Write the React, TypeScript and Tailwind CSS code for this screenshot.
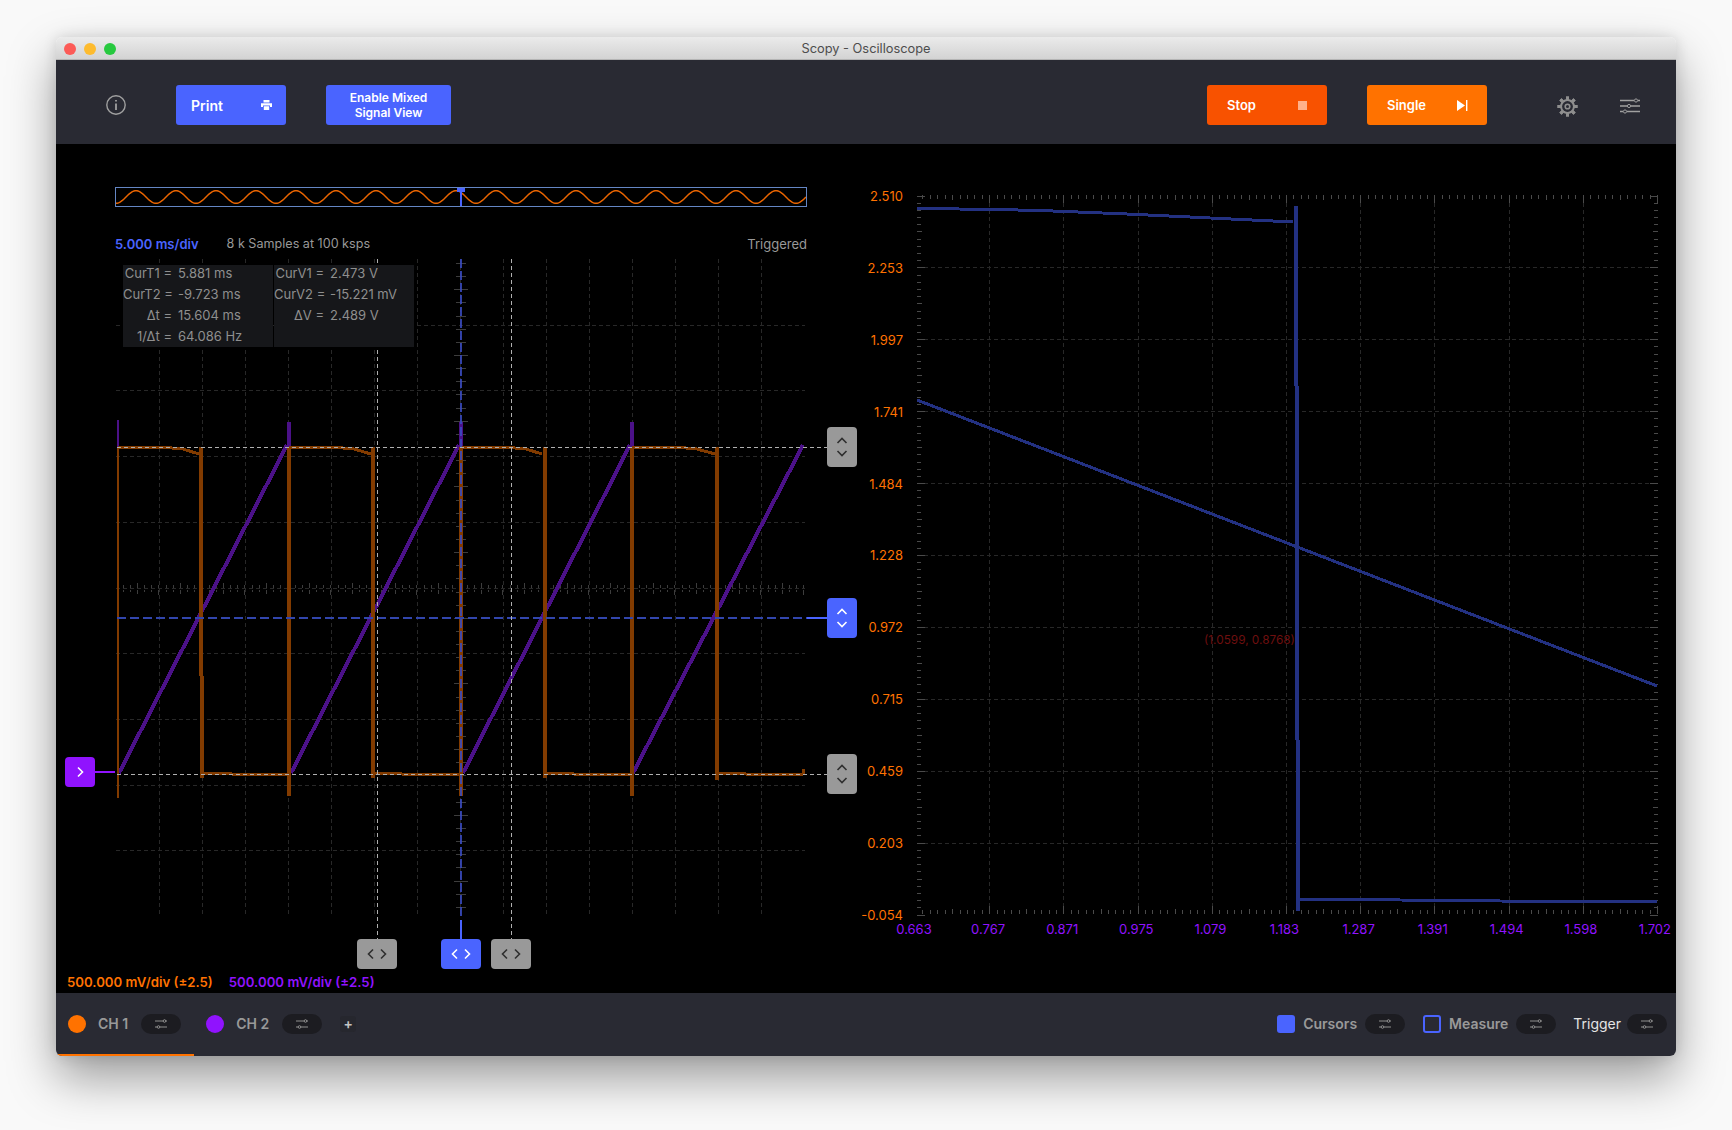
import React from "react";

const BLUE = "#4a64ff";
const WAVE_ORANGE = "#823b00";
const WAVE_PURPLE = "#4b1188";
const WAVE_BLUE = "#233182";
const GRID = "#282828";
const TICK = "#3d3d3d";

const range = (n: number) => Array.from({ length: n }, (_, i) => i);

// small sliders glyph used in toolbar and channel pills
const Sliders = ({ w, h, color }: { w: number; h: number; color: string }) => (
  <svg width={w} height={h} viewBox="0 0 20 16" fill="none" stroke={color}>
    <path d="M0 2.5h14M18 2.5h2M0 8h7M11 8h9M0 13.5h3M7 13.5h13" strokeWidth="1.6" />
    <circle cx="16" cy="2.5" r="1.6" strokeWidth="1" />
    <circle cx="9" cy="8" r="1.6" strokeWidth="1" />
    <circle cx="5" cy="13.5" r="1.6" strokeWidth="1" />
  </svg>
);

const PillSliders = () => (
  <svg width="12" height="10" viewBox="0 0 12 10" fill="none" stroke="#8f8f8f" strokeWidth="1">
    <path d="M0 2h8M11 2h1M0 8h2M5 8h7" />
    <circle cx="9.5" cy="2" r="1.3" />
    <circle cx="3.5" cy="8" r="1.3" />
  </svg>
);

const Pill = ({ className }: { className: string }) => (
  <div className={`w-10 h-5 rounded-full bg-[#1c1c21] flex items-center justify-center ${className}`}>
    <PillSliders />
  </div>
);

const Gear = () => (
  <svg width="21" height="21" viewBox="0 0 21 21" fill="none">
    {range(8).map((i) => (
      <rect key={i} x="9" y="0.5" width="3" height="20" fill="#8e8e8e" transform={`rotate(${i * 45} 10.5 10.5)`} />
    ))}
    <circle cx="10.5" cy="10.5" r="7.4" fill="#8e8e8e" />
    <circle cx="10.5" cy="10.5" r="5.4" fill="#292a33" />
    <circle cx="10.5" cy="10.5" r="2.3" stroke="#8e8e8e" strokeWidth="1.6" />
  </svg>
);

const Handle = ({
  className,
  active,
  dir,
}: {
  className: string;
  active?: boolean;
  dir: "h" | "v";
}) => {
  const stroke = active ? "#ffffff" : "#2f2f2f";
  return (
    <div
      className={`absolute rounded-[4px] flex items-center justify-center ${active ? "bg-[#4a64ff]" : "bg-[#999999]"} ${className}`}
    >
      {dir === "h" ? (
        <svg width="20" height="12" viewBox="0 0 20 12" fill="none" stroke={stroke} strokeWidth="1.6">
          <path d="M6 1.5 1.5 6 6 10.5M14 1.5 18.5 6 14 10.5" />
        </svg>
      ) : (
        <svg width="12" height="20" viewBox="0 0 12 20" fill="none" stroke={stroke} strokeWidth="1.6">
          <path d="M1.5 6 6 1.5 10.5 6M1.5 14 6 18.5 10.5 14" />
        </svg>
      )}
    </div>
  );
};

const Overview = () => {
  const pts = range(692).map((i) => {
    const y = 10 - 6.3 * Math.sin(((i + 115 - 136) / 40) * 2 * Math.PI + Math.PI / 2);
    return `${i},${y.toFixed(2)}`;
  });
  return (
    <svg width="692" height="20" viewBox="0 0 692 20" className="block">
      <polyline points={pts.join(" ")} fill="none" stroke="#e86400" strokeWidth="1.5" />
      <rect x="0.5" y="0.5" width="691" height="19" fill="none" stroke="#6486c4" />
      <rect x="342" y="1" width="8" height="4" fill={BLUE} />
      <rect x="345" y="1" width="2" height="18" fill={BLUE} />
    </svg>
  );
};

const ORANGE_LINES = [
  "118,447.5 167,447.5 183,449 199,454",
  "289,447.5 338,447.5 354,449 371,454",
  "461,447.5 510,447.5 526,449 542,454",
  "632,447.5 681,447.5 697,449 715,454",
  "202,773 228,773 232,774 288,774",
  "373,773 398,773 402,774 461,774",
  "545,773 570,773 574,774 631,774",
  "717,773 742,773 746,774 803,774",
];

const ScopePlot = () => {
  const vGrid = range(15).map((i) => 159 + 43 * i);
  const hGrid = range(9).map((i) => 324.7 + 65.7 * i);
  const rulerX = range(96).map((i) => 123 + (43 / 6) * i);
  const rulerY = range(50).map((i) => 263 + 13.14 * i);
  return (
    <svg width="804" height="720" viewBox="56 252 804 720" className="block">
      <g stroke={GRID} strokeDasharray="4 3" shapeRendering="crispEdges">
        {vGrid.map((x) => (
          <line key={x} x1={x + 0.5} x2={x + 0.5} y1="259" y2="916" />
        ))}
        {hGrid.map((y) => (
          <line key={y} x1="116" x2="805" y1={Math.round(y) + 0.5} y2={Math.round(y) + 0.5} />
        ))}
      </g>
      <g stroke={TICK} shapeRendering="crispEdges">
        {rulerX.map((x, i) => (
          <g key={i}>
            <line x1={x} x2={x} y1={i % 6 === 2 ? 583 : 585} y2="588" />
            <line x1={x} x2={x} y1="590" y2={i % 6 === 5 ? 595 : i % 6 === 2 ? 594 : 592} />
          </g>
        ))}
        {rulerY.map((y, i) => (
          <line
            key={i}
            x1={i % 5 === 2 ? 454 : 456}
            x2={i % 5 === 2 ? 467.5 : 465.5}
            y1={Math.round(y) + 0.5}
            y2={Math.round(y) + 0.5}
          />
        ))}
      </g>

      {/* channel 2 ramps */}
      <g stroke={WAVE_PURPLE} fill="none" shapeRendering="crispEdges">
        <path d="M119 773 287 445M291 773 459 445M463 773 630 445M633 773 803 445" strokeWidth="4" />
        <path d="M118 420V447" strokeWidth="2" />
        <path d="M289 422V447M461 422V447M632 422V447" strokeWidth="4" />
      </g>

      {/* channel 1 square */}
      <g stroke={WAVE_ORANGE} fill="none" strokeWidth="3" shapeRendering="crispEdges">
        {ORANGE_LINES.map((p) => (
          <polyline key={p} points={p} />
        ))}
        <path d="M118 447V798" strokeWidth="2" />
        <path d="M201 447V676" strokeWidth="4" />
        <path d="M201.5 676V758" strokeWidth="4" />
        <path d="M202 758V778" strokeWidth="4" />
        <path d="M289 447V796M373 447V778M461 447V796M545 447V778M632 447V796M717 447V780" strokeWidth="4" />
        <path d="M803 769V774" strokeWidth="3" />
      </g>

      {/* trigger + cursors */}
      <g shapeRendering="crispEdges">
        <line x1="117" x2="807" y1="618" y2="618" stroke="#3246ad" strokeWidth="2" strokeDasharray="9 4" />
        <line x1="807" x2="827" y1="618" y2="618" stroke={BLUE} strokeWidth="2" />
        <line x1="461" x2="461" y1="259" y2="916" stroke="#3a4cc4" strokeWidth="2" strokeDasharray="9 3" opacity="0.85" />
        <line x1="461" x2="461" y1="920" y2="940" stroke={BLUE} strokeWidth="2" />
        <g stroke="#b0b0b0" strokeDasharray="4 3">
          <line x1="117" x2="827" y1="447.5" y2="447.5" />
          <line x1="117" x2="827" y1="774.5" y2="774.5" />
          <line x1="377.5" x2="377.5" y1="259" y2="940" />
          <line x1="511.5" x2="511.5" y1="259" y2="940" />
        </g>
        <line x1="95" x2="115" y1="772" y2="772" stroke="#9013fe" strokeWidth="2" />
      </g>
    </svg>
  );
};

const RightPlot = () => {
  const xs = range(9).map((i) => 989.2 + 74.2 * i);
  const ys = range(9).map((i) => 267.4 + 71.9 * i);
  const xTicks = range(101).map((i) => 915 + 7.42 * i);
  const yTicks = range(101).map((i) => 195.5 + 7.19 * i);
  const tickLen = (i: number) => (i % 10 === 0 ? 8 : i % 5 === 0 ? 5 : 4);
  return (
    <svg width="773" height="731" viewBox="903 190 773 731" className="block">
      <g stroke={GRID} strokeDasharray="4 3" shapeRendering="crispEdges">
        {xs.map((x) => (
          <line key={x} x1={Math.round(x) + 0.5} x2={Math.round(x) + 0.5} y1="196" y2="914" />
        ))}
        {ys.map((y) => (
          <line key={y} x1="917" x2="1657" y1={Math.round(y) + 0.5} y2={Math.round(y) + 0.5} />
        ))}
      </g>
      <g stroke="#4a4a4a" shapeRendering="crispEdges">
        {xTicks.map((x, i) =>
          x < 917 ? null : (
            <g key={i}>
              <line x1={Math.round(x) + 0.5} x2={Math.round(x) + 0.5} y1="195" y2={195 + tickLen(i)} />
              <line x1={Math.round(x) + 0.5} x2={Math.round(x) + 0.5} y1={914 - tickLen(i)} y2="914" />
            </g>
          ),
        )}
        {yTicks.map((y, i) => (
          <g key={i}>
            <line x1="917" x2={917 + tickLen(i)} y1={Math.round(y) + 0.5} y2={Math.round(y) + 0.5} />
            <line x1={1658 - tickLen(i)} x2="1658" y1={Math.round(y) + 0.5} y2={Math.round(y) + 0.5} />
          </g>
        ))}
      </g>
      <g stroke={WAVE_BLUE} fill="none" shapeRendering="crispEdges">
        <path d="M917 400 1657 686" strokeWidth="3" />
        <polyline points="917,208.5 1000,209.5 1053,211 1127,214 1200,217.5 1293,222" strokeWidth="3" />
        <polyline points="1298,899 1400,900 1500,901 1657,902" strokeWidth="3" />
        <path d="M1296 206V386" strokeWidth="4" />
        <path d="M1297 386V740" strokeWidth="4" />
        <path d="M1298 740V911" strokeWidth="4" />
      </g>
    </svg>
  );
};

const CURSOR_T = [
  ["CurT1 =", "5.881 ms"],
  ["CurT2 =", "-9.723 ms"],
  ["Δt =", "15.604 ms"],
  ["1/Δt =", "64.086 Hz"],
];
const CURSOR_V = [
  ["CurV1 =", "2.473 V"],
  ["CurV2 =", "-15.221 mV"],
  ["ΔV =", "2.489 V"],
];

const CursorTable = () => (
  <div className="absolute left-[67px] top-[13px] w-[291px] h-[82px] flex gap-[1px] text-[13px] leading-[21px] text-[#8f8f8f]">
    <div className="w-[150px] bg-[#16171a]">
      <div className="-mt-[2px]">
        {CURSOR_T.map(([k, v]) => (
          <div key={k} className="flex">
            <span className="w-[49px] text-right whitespace-pre">{k}</span>
            <span className="ml-[6px]">{v}</span>
          </div>
        ))}
      </div>
    </div>
    <div className="flex-1 bg-[#16171a]">
      <div className="-mt-[2px]">
        {CURSOR_V.map(([k, v]) => (
          <div key={k} className="flex">
            <span className="w-[50px] text-right whitespace-pre">{k}</span>
            <span className="ml-[6px]">{v}</span>
          </div>
        ))}
      </div>
    </div>
  </div>
);

const Y_LABELS = ["2.510", "2.253", "1.997", "1.741", "1.484", "1.228", "0.972", "0.715", "0.459", "0.203", "-0.054"];
const X_LABELS = ["0.663", "0.767", "0.871", "0.975", "1.079", "1.183", "1.287", "1.391", "1.494", "1.598", "1.702"];

export default function App() {
  return (
    <div
      className="w-[1732px] h-[1130px] bg-[#f9f9f9] overflow-hidden pt-[37px] pl-[56px]"
      style={{ fontFamily: "Inter, 'Liberation Sans', sans-serif" }}
    >
      <div className="w-[1620px] h-[1019px] flex flex-col rounded-[6px] overflow-hidden shadow-[0_22px_48px_rgba(0,0,0,0.38),0_0_14px_rgba(0,0,0,0.12)]">
        {/* Title bar */}
        <div className="relative h-[23px] shrink-0 bg-gradient-to-b from-[#ebebeb] to-[#d3d3d3] border-b border-[#b4b4b4] flex items-center justify-center pt-[2px]">
          <div className="absolute left-[8px] top-[6px] flex gap-2">
            <span className="w-3 h-3 rounded-full bg-[#fc5b57]" />
            <span className="w-3 h-3 rounded-full bg-[#fdbb2e]" />
            <span className="w-3 h-3 rounded-full bg-[#27c93f]" />
          </div>
          <span className="text-[12.8px] text-[#4d4d4d]">Scopy - Oscilloscope</span>
        </div>

        {/* Toolbar */}
        <div className="h-[84px] shrink-0 bg-[#292a33] flex items-center pl-[50px] pr-[36px] pt-[6px]">
          <svg width="20" height="20" viewBox="0 0 20 20" fill="none" stroke="#a0a0a0">
            <circle cx="10" cy="10" r="9.2" strokeWidth="1.4" />
            <path d="M10 8.5V15" strokeWidth="1.8" />
            <path d="M10 5V6.6" strokeWidth="1.8" />
          </svg>
          <button className="ml-[50px] w-[110px] h-10 rounded-[3px] bg-[#4a64ff] text-white text-[14px] font-semibold flex items-center justify-between pl-[15px] pr-[14px]">
            Print
            <svg width="11" height="10" viewBox="0 0 11 10" fill="#ffffff">
              <path d="M2.5 0h6v2.5h-6zM0 3.2h11V7H9V5.5H2V7H0zM2.8 6.2h5.4V10H2.8z" />
            </svg>
          </button>
          <button className="ml-10 w-[125px] h-10 rounded-[3px] bg-[#4a64ff] text-white text-[12px] font-semibold leading-[15px]">
            Enable Mixed
            <br />
            Signal View
          </button>
          <button className="ml-auto w-[120px] h-10 rounded-[3px] bg-[#f85200] text-white text-[13px] font-semibold flex items-center justify-between pl-5 pr-[19px] pt-[1px]">
            Stop
            <span className="w-[9px] h-[9px] mr-[1px] bg-[#ffb08a]" />
          </button>
          <button className="ml-10 w-[120px] h-10 rounded-[3px] bg-[#ff7200] text-white text-[13px] font-semibold flex items-center justify-between pl-5 pr-[19px] pt-[1px]">
            Single
            <svg width="11" height="11" viewBox="0 0 11 11" fill="#ffffff">
              <path d="M0 0 8 5.5 0 11zM9 0H10.4V11H9z" />
            </svg>
          </button>
          <div className="ml-[70px] mt-[2px]">
            <Gear />
          </div>
          <div className="ml-[42px] mt-[2px]">
            <Sliders w={20} h={16} color="#a0a0a0" />
          </div>
        </div>

        {/* Plots */}
        <div className="flex-1 min-h-0 bg-black flex">
          <div className="w-[804px] shrink-0 pt-[43px]">
            <div className="ml-[59px] w-[692px]">
              <Overview />
              <div className="mt-[29px] h-4 flex items-center text-[13px] leading-4">
                <span className="font-semibold text-[#4a64ff]">5.000 ms/div</span>
                <span className="ml-[28px] text-[12.6px] text-[#999999]">8 k Samples at 100 ksps</span>
                <span className="ml-auto text-[#999999]">Triggered</span>
              </div>
            </div>
            <div className="relative w-[804px] h-[720px]">
              <ScopePlot />
              <CursorTable />
              <Handle dir="v" className="left-[771px] top-[175px] w-[30px] h-10" />
              <Handle dir="v" active className="left-[771px] top-[346px] w-[30px] h-10" />
              <Handle dir="v" className="left-[771px] top-[502px] w-[30px] h-10" />
              <Handle dir="h" className="left-[301px] top-[687px] w-10 h-[30px]" />
              <Handle dir="h" active className="left-[385px] top-[687px] w-10 h-[30px]" />
              <Handle dir="h" className="left-[435px] top-[687px] w-10 h-[30px]" />
              <div className="absolute left-[9px] top-[505px] w-[30px] h-[30px] rounded-[4px] bg-[#9013fe] flex items-center justify-center">
                <svg width="8" height="12" viewBox="0 0 8 12" fill="none" stroke="#ffffff" strokeWidth="1.6">
                  <path d="M2 1.5 6.5 6 2 10.5" />
                </svg>
              </div>
            </div>
            <div className="mt-[2px] ml-[11px] flex gap-4 text-[13.2px] leading-4 font-semibold">
              <span className="text-[#ff7200]">500.000 mV/div (±2.5)</span>
              <span className="text-[#9013fe]">500.000 mV/div (±2.5)</span>
            </div>
          </div>

          <div className="relative flex-1 pt-[46px]">
            <div className="flex h-[731px]">
              <div className="w-[43px] h-[733px] -mt-[1px] shrink-0 flex flex-col justify-between text-right text-[13px] leading-[14px] text-[#ff7200]">
                {Y_LABELS.map((l) => (
                  <span key={l}>{l}</span>
                ))}
              </div>
              <RightPlot />
            </div>
            <div className="ml-[34px] w-[781px] flex justify-between text-[13px] leading-4 text-[#9013fe]">
              {X_LABELS.map((l) => (
                <span key={l} className="w-10 text-center">
                  {l}
                </span>
              ))}
            </div>
            <span className="absolute left-[344px] top-[488px] text-[11.8px] leading-4 text-[#6e0f0f]">(1.0599, 0.8768)</span>
          </div>
        </div>

        {/* Channel bar */}
        <div className="relative h-[63px] shrink-0 bg-[#292a33] flex items-center pl-3 pr-[9px] pb-[2px] text-[14px] font-semibold text-[#999999]">
          <span className="w-[18px] h-[18px] rounded-full bg-[#ff7200]" />
          <span className="ml-3">CH 1</span>
          <Pill className="ml-[13px]" />
          <span className="ml-[25px] w-[18px] h-[18px] rounded-full bg-[#9013fe]" />
          <span className="ml-3">CH 2</span>
          <Pill className="ml-[13px]" />
          <span className="ml-[18px] w-4 h-4 rounded-[3px] bg-[#26272e] flex items-center justify-center text-[#c4c4c4] text-[14px] leading-none">
            +
          </span>
          <span className="ml-auto w-[18px] h-[18px] rounded-[3px] bg-[#4a64ff]" />
          <span className="ml-2">Cursors</span>
          <Pill className="ml-2" />
          <span className="ml-[18px] w-[18px] h-[18px] rounded-[3px] border-2 border-[#4a64ff]" />
          <span className="ml-2">Measure</span>
          <Pill className="ml-2" />
          <span className="ml-[17px] font-normal text-[#e4e4e4]">Trigger</span>
          <Pill className="ml-[6px]" />
          <div className="absolute left-0 bottom-0 w-[138px] h-[2px] bg-[#ff7200]" />
        </div>
      </div>
    </div>
  );
}
